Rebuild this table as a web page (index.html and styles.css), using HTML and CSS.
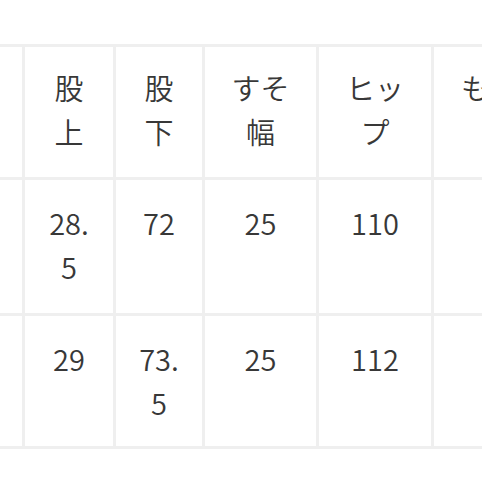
FILE: index.html
```html
<!DOCTYPE html>
<html lang="ja">
<head>
<meta charset="utf-8">
<link rel="stylesheet" href="styles.css">
</head>
<body>
<div class="viewport">
  <div class="size-table">
    <div class="cell head"></div>
    <div class="cell head">股上</div>
    <div class="cell head">股下</div>
    <div class="cell head">すそ幅</div>
    <div class="cell head">ヒップ</div>
    <div class="cell head">もも</div>

    <div class="cell"></div>
    <div class="cell">28.5</div>
    <div class="cell">72</div>
    <div class="cell">25</div>
    <div class="cell">110</div>
    <div class="cell"></div>

    <div class="cell"></div>
    <div class="cell">29</div>
    <div class="cell">73.5</div>
    <div class="cell">25</div>
    <div class="cell">112</div>
    <div class="cell"></div>
  </div>
</div>
</body>
</html>
```

FILE: styles.css
```css
html, body {
  margin: 0;
  padding: 0;
  background: #ffffff;
}

.viewport {
  width: 482px;
  height: 482px;
  overflow: hidden;
  padding-top: 44px;
  box-sizing: border-box;
}

.size-table {
  display: grid;
  grid-template-columns: 100px 88px 86px 111px 112px 112px;
  grid-template-rows: 130px 133px 130px;
  gap: 3px;
  padding: 3px;
  background: #efefef;
  width: max-content;
  margin-left: -81px;
}

.cell {
  background: #ffffff;
  padding: 20px 20px;
  text-align: center;
  font-family: "Noto Sans CJK JP", "Noto Sans", sans-serif;
  font-size: 29px;
  font-weight: 350;
  line-height: 44px;
  color: #383838;
  word-break: break-all;
  overflow: hidden;
}

.head {
  padding-top: 18px;
}
```
